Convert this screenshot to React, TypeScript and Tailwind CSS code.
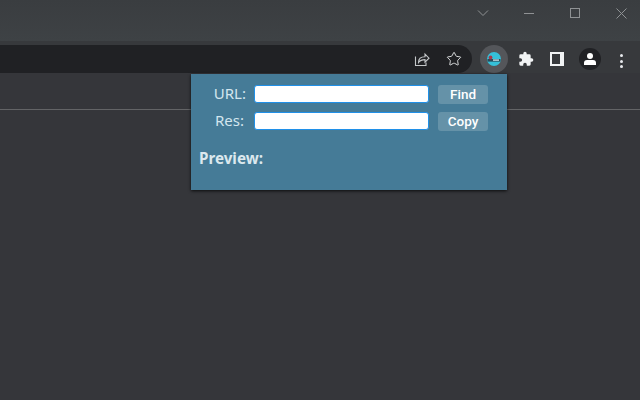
import React from 'react';
import { Star } from 'lucide-react';

const ExtensionIcon = () => (
  <svg width="16" height="16" viewBox="0 0 16 16">
    <circle cx="8" cy="8" r="7" fill="#35c0d8" />
    <rect x="1.5" y="8" width="13" height="2.6" fill="#2a4a58" />
    <rect x="7" y="8.4" width="6" height="1.4" fill="#c8dfe6" />
    <circle cx="4.5" cy="6.5" r="1.9" fill="#a83a4a" />
  </svg>
);

const PuzzleIcon = () => (
  <svg width="16" height="16" viewBox="0 0 24 24" fill="#f1f3f4">
    <path d="M20.5 11H19V7a2 2 0 0 0-2-2h-4V3.5a2.5 2.5 0 0 0-5 0V5H4a2 2 0 0 0-2 2v3.8h1.5a2.7 2.7 0 0 1 0 5.4H2V20a2 2 0 0 0 2 2h3.8v-1.5a2.7 2.7 0 0 1 5.4 0V22H17a2 2 0 0 0 2-2v-4h1.5a2.5 2.5 0 0 0 0-5z" />
  </svg>
);

const ShareIcon = () => (
  <svg width="16" height="16" viewBox="0 0 16 16" fill="none" stroke="#c4c7c9" strokeWidth="1.1">
    <path d="M1.5 5.5v9h10.5v-3" />
    <path d="M4.5 11.5c0-4 3-5.8 6.5-5.8V3l4 4.2-4 4V8.6c-3 0-5 .8-6.5 2.9z" />
  </svg>
);

const PopupRow = ({ label, button, labelClass }: { label: string; button: string; labelClass: string }) => (
  <div className="flex items-center h-[19px]">
    <span className={`w-[55px] pb-[2px] text-[15px] leading-none text-[#d3e6ee] text-right ${labelClass}`}>{label}</span>
    <input
      type="text"
      className="self-start ml-[8px] w-[175px] h-[18px] bg-white rounded-[3px] border-[1.5px] border-[#2090e8] outline-none"
    />
    <button className="ml-[9px] w-[50px] h-[19px] rounded-[3px] bg-[#6592a8] text-white text-[13.5px] font-medium leading-none font-['Roboto',sans-serif]">
      {button}
    </button>
  </div>
);

export default function App() {
  return (
    <div className="relative w-[640px] h-[400px] overflow-hidden bg-[#35363a] font-['Noto_Sans',sans-serif]">
      {/* title bar */}
      <div className="h-[41px] bg-[linear-gradient(to_bottom,#3a3d40,#3e4245)] flex justify-end items-start text-[#8f9294]">
        <div className="w-[46px] h-[26px] flex items-center justify-center">
          <svg width="12" height="8" viewBox="0 0 12 8" fill="none" stroke="currentColor" strokeWidth="1">
            <path d="M1 1.5l5 5 5-5" />
          </svg>
        </div>
        <div className="w-[46px] h-[26px] flex items-center justify-center">
          <div className="w-[10px] h-[1px] bg-[#8f9294]" />
        </div>
        <div className="w-[46px] h-[26px] flex items-center justify-center">
          <div className="w-[10px] h-[10px] border border-[#8f9294]" />
        </div>
        <div className="w-[46px] h-[26px] mr-[-4px] flex items-center justify-center">
          <svg width="11" height="11" viewBox="0 0 11 11" fill="none" stroke="currentColor" strokeWidth="1">
            <path d="M.5.5l10 10M10.5.5l-10 10" />
          </svg>
        </div>
      </div>

      {/* toolbar */}
      <div className="h-[32px] bg-[#37393c] flex items-start">
        <div className="mt-[4px] w-[472px] h-[28px] bg-[#202124] rounded-r-[14px] flex items-center justify-end pr-[10px] gap-[16px]">
          <ShareIcon />
          <Star size={16} strokeWidth={1.4} className="text-[#e3e5e6]" />
        </div>
        <div className="mt-[4px] ml-[8px] w-[28px] h-[28px] rounded-full bg-[#54565a] flex items-center justify-center">
          <ExtensionIcon />
        </div>
        <div className="mt-[10px] ml-[10px]">
          <PuzzleIcon />
        </div>
        <div className="mt-[11px] ml-[16px] w-[14px] h-[14px] bg-[#f1f3f4]">
          <div className="ml-[2px] mt-[2px] w-[8px] h-[10px] bg-[#37393c]" />
        </div>
        <div className="mt-[7px] ml-[15px] w-[22px] h-[22px] rounded-full bg-[#202124] flex flex-col items-center justify-center">
          <div className="w-[6px] h-[6px] rounded-full bg-white" />
          <div className="mt-[1px] w-[12px] h-[5px] rounded-t-[3px] bg-white" />
        </div>
        <div className="mt-[13px] ml-[19px] flex flex-col gap-[2.5px]">
          <div className="w-[3px] h-[3px] rounded-full bg-[#e8eaed]" />
          <div className="w-[3px] h-[3px] rounded-full bg-[#e8eaed]" />
          <div className="w-[3px] h-[3px] rounded-full bg-[#e8eaed]" />
        </div>
      </div>

      {/* bookmarks strip */}
      <div className="h-[37px] border-b border-[#636466]" />

      {/* extension popup */}
      <div className="absolute left-[191px] top-[74px] w-[316px] h-[116px] bg-[#457b97] shadow-[0_1px_3px_rgba(0,0,0,0.8)] pt-[11px]">
        <div className="flex flex-col gap-[8px]">
          <PopupRow label="URL:" button="Find" labelClass="" />
          <PopupRow label="Res:" button="Copy" labelClass="pr-[2px]" />
        </div>
        <div className="mt-[17px] ml-[8px] text-[15.2px] leading-[20px] font-bold text-[#dce8ee]">Preview:</div>
      </div>
    </div>
  );
}
